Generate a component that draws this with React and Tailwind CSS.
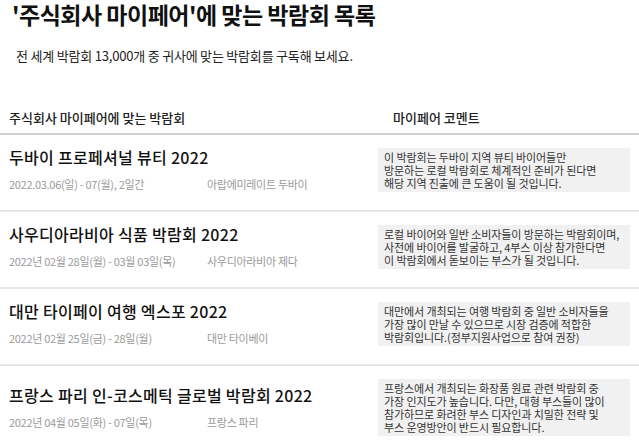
const fairs = [
  {
    title: "두바이 프로페셔널 뷰티 2022",
    date: "2022.03.06(일) - 07(월), 2일간",
    place: "아랍에미레이트 두바이",
    comment: [
      "이 박람회는 두바이 지역 뷰티 바이어들만",
      "방문하는 로컬 박람회로 체계적인 준비가 된다면",
      "해당 지역 진출에 큰 도움이 될 것입니다.",
    ],
  },
  {
    title: "사우디아라비아 식품 박람회 2022",
    date: "2022년 02월 28일(월) - 03월 03일(목)",
    place: "사우디아라비아 제다",
    comment: [
      "로컬 바이어와 일반 소비자들이 방문하는 박람회이며,",
      "사전에 바이어를 발굴하고, 4부스 이상 참가한다면",
      "이 박람회에서 돋보이는 부스가 될 것입니다.",
    ],
  },
  {
    title: "대만 타이페이 여행 엑스포 2022",
    date: "2022년 02월 25일(금) - 28일(월)",
    place: "대만 타이베이",
    comment: [
      "대만에서 개최되는 여행 박람회 중 일반 소비자들을",
      "가장 많이 만날 수 있으므로 시장 검증에 적합한",
      "박람회입니다.(정부지원사업으로 참여 권장)",
    ],
  },
  {
    title: "프랑스 파리 인-코스메틱 글로벌 박람회 2022",
    date: "2022년 04월 05일(화) - 07일(목)",
    place: "프랑스 파리",
    comment: [
      "프랑스에서 개최되는 화장품 원료 관련 박람회 중",
      "가장 인지도가 높습니다. 다만, 대형 부스들이 많이",
      "참가하므로 화려한 부스 디자인과 치밀한 전략 및",
      "부스 운영방안이 반드시 필요합니다.",
    ],
  },
];

function FairRow({ fair }) {
  return (
    <div className="grid grid-cols-[369px_252px] items-center border-b-2 border-[#e6e6e6] pt-[13px] pb-[18px] pl-[9px]">
      <div>
        <div className="text-[16px] leading-[18px] font-medium tracking-[0.3px] text-[#111] whitespace-nowrap">
          {fair.title}
        </div>
        <div className="mt-[10px] flex text-[11px] leading-[16px] tracking-[-0.3px] text-[#9a9a9a] whitespace-nowrap">
          <span className="w-[198px]">{fair.date}</span>
          <span>{fair.place}</span>
        </div>
      </div>
      <div className="bg-[#f1f1f1] px-[6px] pt-[3px] pb-[2px] text-[11px] leading-[13px] tracking-[-0.1px] text-[#333]">
        {fair.comment.map((line) => (
          <div key={line} className="whitespace-nowrap">{line}</div>
        ))}
      </div>
    </div>
  );
}

export default function App() {
  return (
    <div className="w-[639px] h-[440px] overflow-hidden bg-white font-['Noto_Sans_CJK_KR',sans-serif]">
      <h1 className="pl-3 text-[23px] leading-[28px] font-bold tracking-[-0.5px] text-[#111]">
        '주식회사 마이페어'에 맞는 박람회 목록
      </h1>
      <p className="mt-[19px] pl-4 text-[13px] leading-[18px] tracking-[-0.2px] text-[#222]">
        전 세계 박람회 13,000개 중 귀사에 맞는 박람회를 구독해 보세요.
      </p>

      <div className="mt-[44px] grid grid-cols-[384px_1fr] border-b-2 border-[#cfcfcf] pb-[6px] pl-[9px] text-[13px] leading-[18px] font-medium text-[#222]">
        <span>주식회사 마이페어에 맞는 박람회</span>
        <span>마이페어 코멘트</span>
      </div>

      {fairs.map((fair) => (
        <FairRow key={fair.title} fair={fair} />
      ))}
    </div>
  );
}
